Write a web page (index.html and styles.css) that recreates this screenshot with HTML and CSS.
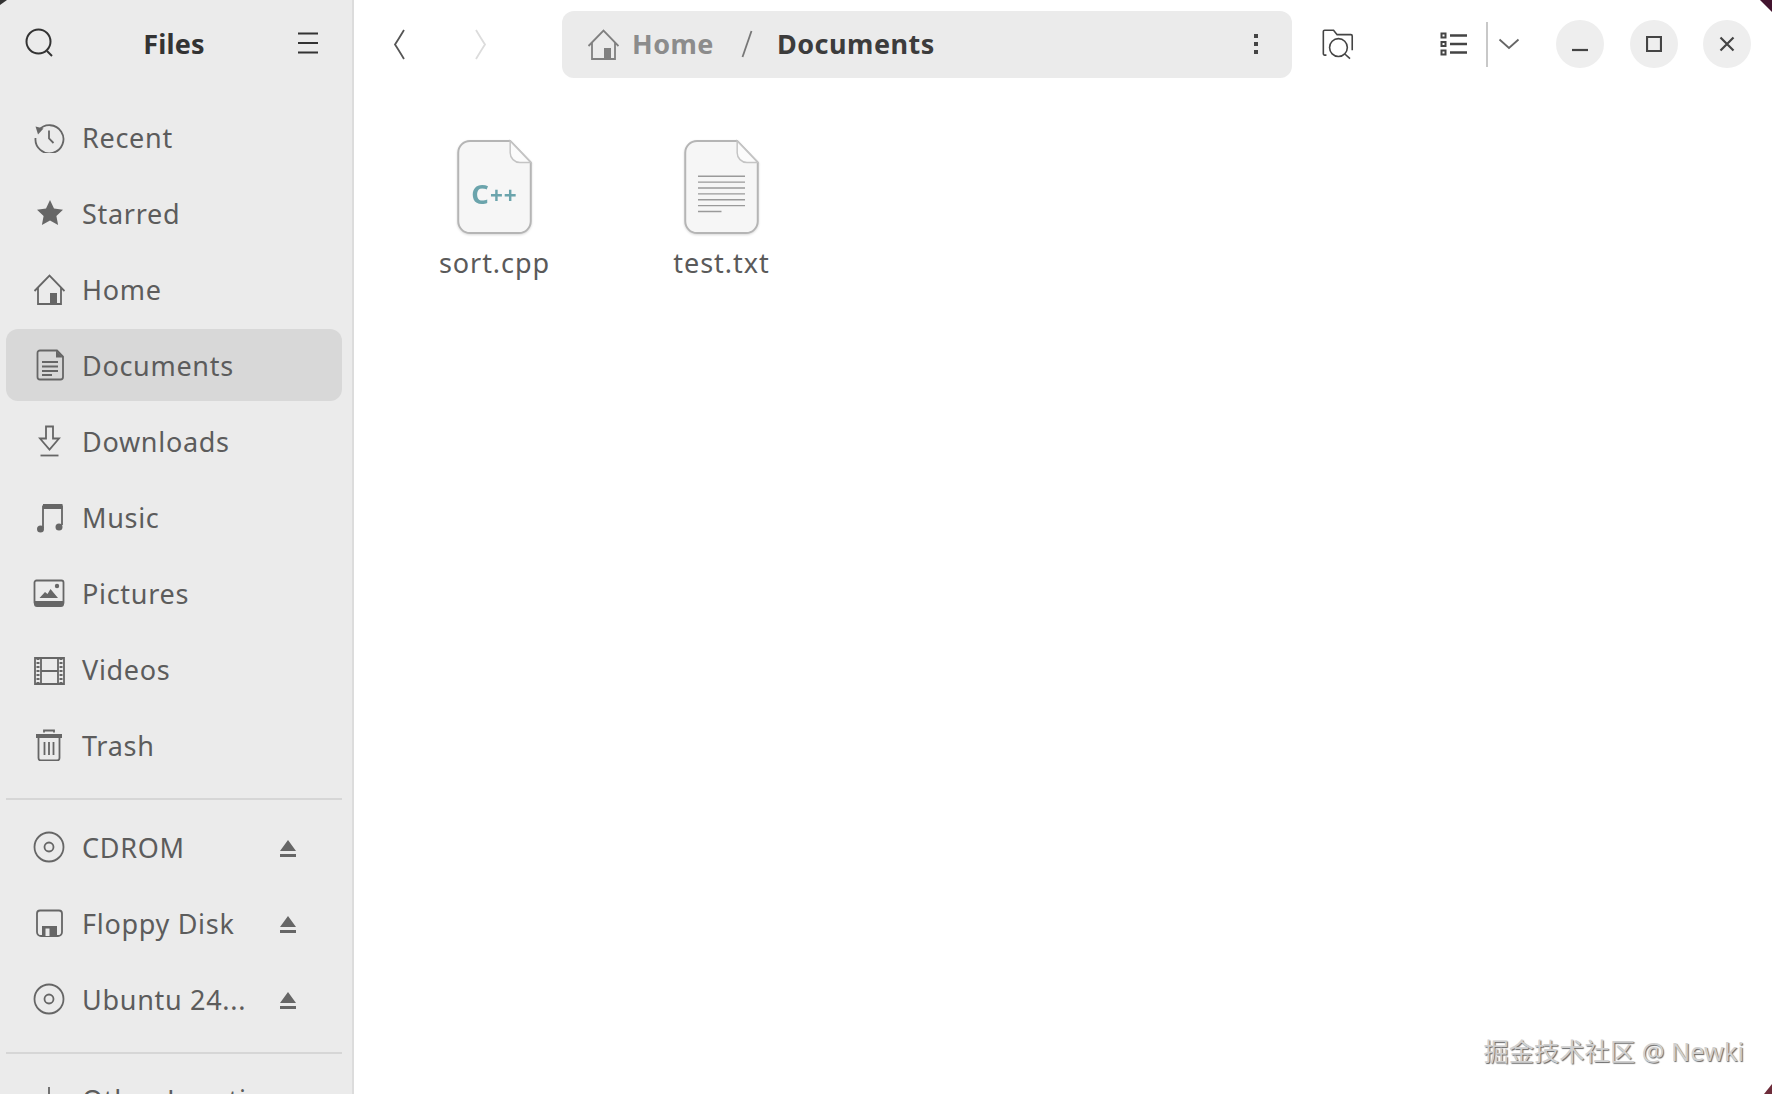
FILE: index.html
```html
<!DOCTYPE html>
<html lang="en">
<head>
<meta charset="utf-8">
<title>Files</title>
<link rel="stylesheet" href="styles.css">
</head>
<body>
<div class="window">
  <aside class="sidebar">
    <header class="side-head">
      <svg class="ico-head" viewBox="0 0 32 32"><circle cx="14.5" cy="14.5" r="12"/><path d="M23 24l5 5"/></svg>
      <span class="side-title">Files</span>
      <svg class="ico-head" viewBox="0 0 32 32"><path d="M6 6.5h20M6 16h20M6 25.5h20"/></svg>
    </header>
    <nav class="places">
      <a class="row"><svg class="ico" viewBox="0 0 32 32"><path d="M5.5 9.5A14 14 0 1 1 2.5 17"/><path class="solid" d="M2.5 5.5l8 2-5.5 6z"/><path d="M16 9.5v8l4.5 4.5"/></svg><span>Recent</span></a>
      <a class="row"><svg class="ico" viewBox="0 0 32 32"><path class="solid" d="M17 3l4 8.5 9 1.2-6.6 6.2 1.7 9.1-8.100-4.500-8.100 4.500 1.700-9.100L4 12.700l9-1.200z"/></svg><span>Starred</span></a>
      <a class="row"><svg class="ico" viewBox="0 0 32 32"><path d="M1.500 18L16.500 2.500 31.500 18M5 14v17h23V14"/><path class="solid" d="M17 20h7v11h-7z"/></svg><span>Home</span></a>
      <a class="row is-active"><svg class="ico" viewBox="0 0 32 32"><path d="M7 1.500h17l6 6V28a2.500 2.500 0 0 1-2.500 2.500h-20.500A2.500 2.500 0 0 1 4.500 28V4A2.500 2.500 0 0 1 7 1.500z"/><path class="solid" d="M23 1.500l7 7h-7z"/><path d="M9 13h16M9 17.500h16M9 22h16M9 26h10"/></svg><span>Documents</span></a>
      <a class="row"><svg class="ico" viewBox="0 0 32 32"><path d="M13 1.500h7v12h6l-9.500 11-9.500-11h6z"/><path d="M7.500 30.500h18"/></svg><span>Downloads</span></a>
      <a class="row"><svg class="ico" viewBox="0 0 32 32"><path d="M10 27V5.500h19V24"/><path class="solid" d="M10 3h19.500v5H10z"/><circle class="solid" cx="7.500" cy="28" r="3.500"/><circle class="solid" cx="26" cy="26" r="3.500"/></svg><span>Music</span></a>
      <a class="row"><svg class="ico" viewBox="0 0 32 32"><rect x="1.500" y="3.500" width="29" height="24" rx="2"/><path class="solid" d="M1 24h30v3a3 3 0 0 1-3 3H4a3 3 0 0 1-3-3zM6.500 21l5.500-6 2.500 2 3-5 7.500 9z"/><circle class="solid" cx="24" cy="9" r="2.200"/></svg><span>Pictures</span></a>
      <a class="row"><svg class="ico" viewBox="0 0 32 32"><path d="M2 5h29v26H2zM8 5v26M25 5v26M8 18h17"/><path class="dash" d="M5 5v26M28 5v26"/></svg><span>Videos</span></a>
      <a class="row"><svg class="ico" viewBox="0 0 32 32"><path d="M5.500 9v20a2.500 2.500 0 0 0 2.500 2.500h16a2.500 2.500 0 0 0 2.500-2.500V9"/><path class="solid" d="M3 5h26v4H3z"/><path d="M11 3.500V1.500h10v2M11.500 13v13M16 13v13M20.500 13v13"/></svg><span>Trash</span></a>
    </nav>
    <nav class="places places-devices">
      <a class="row"><svg class="ico" viewBox="0 0 32 32"><circle cx="16" cy="16" r="14.500"/><circle cx="16" cy="16" r="4.500"/></svg><span>CDROM</span><svg class="eject" viewBox="0 0 16 18"><path d="M8 0l8 11H0zM0 14h16v3H0z"/></svg></a>
      <a class="row"><svg class="ico" viewBox="0 0 32 32"><path d="M7 3.500h19a3 3 0 0 1 3 3V25a4 4 0 0 1-4 4H8a4 4 0 0 1-4-4V6.500a3 3 0 0 1 3-3z"/><path class="solid" d="M9 19h15v10H9z"/><path class="cut" d="M12.500 21.500h4v7.500h-4z"/></svg><span>Floppy Disk</span><svg class="eject" viewBox="0 0 16 18"><path d="M8 0l8 11H0zM0 14h16v3H0z"/></svg></a>
      <a class="row"><svg class="ico" viewBox="0 0 32 32"><circle cx="16" cy="16" r="14.500"/><circle cx="16" cy="16" r="4.500"/></svg><span class="clip">Ubuntu 24...</span><svg class="eject" viewBox="0 0 16 18"><path d="M8 0l8 11H0zM0 14h16v3H0z"/></svg></a>
    </nav>
    <nav class="places places-other">
      <a class="row"><svg class="ico" viewBox="0 0 32 32"><path d="M16 4v24M4 16h24"/></svg><span>Other Locations</span></a>
    </nav>
  </aside>
  <main class="content">
    <div class="toolbar">
      <button class="nav-btn"><svg class="chev" viewBox="0 0 16 32"><path d="M12 2Q6 12 3 16.500Q6 21 12 31"/></svg></button>
      <button class="nav-btn is-off"><svg class="chev" viewBox="0 0 16 32"><path d="M4 2Q10 12 13 16.500Q10 21 4 31"/></svg></button>
      <div class="pathbar">
        <svg class="ico ico-dim" viewBox="0 0 32 32"><path d="M1.500 18L16.500 2.500 31.500 18M5 14v17h23V14"/><path class="solid" d="M17 20h7v11h-7z"/></svg>
        <span class="crumb crumb-dim">Home</span>
        <svg class="slash" viewBox="0 0 12 28"><path d="M10.500 1L1.500 27"/></svg>
        <span class="crumb">Documents</span>
        <span class="dots"><i></i><i></i><i></i></span>
      </div>
      <button class="tool tool-search"><svg class="ico-tool" viewBox="0 0 36 36"><path d="M5 30.500H3a1.500 1.500 0 0 1-1.500-1.500V4A1.500 1.500 0 0 1 3 2.500h10l4 5h15.500A1.500 1.500 0 0 1 34 9v16"/><circle cx="18.500" cy="22" r="10"/><path d="M26 29.500l5.500 5"/></svg></button>
      <button class="tool tool-list"><svg class="ico-tool" viewBox="0 0 28 24"><path class="thick" d="M10 3.500h17M10 12h17M10 20.500h17"/><rect class="thin" x="1.500" y="1.500" width="4" height="4"/><rect class="thin" x="1.500" y="10" width="4" height="4"/><rect class="thin" x="1.500" y="18.500" width="4" height="4"/></svg></button>
      <span class="tool-sep"></span>
      <button class="tool-drop"><svg class="chev-down" viewBox="0 0 22 12"><path d="M1.500 1.500L11 10l9.500-8.500"/></svg></button>
      <div class="controls">
        <button class="ctl"><svg class="ctl-ico" viewBox="0 0 16 16"><path d="M0 14h16"/></svg></button>
        <button class="ctl"><svg class="ctl-ico" viewBox="0 0 16 16"><path d="M1 1h14v14H1z"/></svg></button>
        <button class="ctl"><svg class="ctl-ico" viewBox="0 0 16 16"><path d="M1.500 1.500l13 13M14.500 1.500l-13 13"/></svg></button>
      </div>
    </div>
    <section class="files">
      <figure class="file">
        <svg class="page" viewBox="0 0 78 98"><path class="sheet" d="M14 2h41l21 22v60a12 12 0 0 1-12 12H14A12 12 0 0 1 2 84V14A12 12 0 0 1 14 2z"/><path class="fold" d="M55 2v12a10 10 0 0 0 10 10h11z"/><text class="cpp" x="39" y="66" text-anchor="middle"><tspan class="cpp-c">C</tspan>++</text></svg>
        <figcaption>sort.cpp</figcaption>
      </figure>
      <figure class="file">
        <svg class="page" viewBox="0 0 78 98"><path class="sheet" d="M14 2h41l21 22v60a12 12 0 0 1-12 12H14A12 12 0 0 1 2 84V14A12 12 0 0 1 14 2z"/><path class="fold" d="M55 2v12a10 10 0 0 0 10 10h11z"/><path class="lines" d="M15 38h48M15 44h48M15 50h48M15 56h48M15 62h48M15 68h48M15 74h24"/></svg>
        <figcaption>test.txt</figcaption>
      </figure>
    </section>
  </main>
  <div class="watermark">掘金技术社区 @ Newki</div>
  <span class="corner corner-tl"></span>
  <span class="corner corner-tr"></span>
  <span class="corner corner-br"></span>
</div>
</body>
</html>
```
FILE: styles.css
```css
html, body { margin: 0; padding: 0; height: 100%; }
body { background: #fff; overflow: hidden; font-family: "Noto Sans", "Noto Sans CJK SC", sans-serif; color: #555; }
button { background: none; border: 0; padding: 0; margin: 0; font: inherit; color: inherit; display: flex; align-items: center; justify-content: center; }
svg { display: block; flex: none; fill: none; stroke: #666; stroke-width: 1.800; }
svg .solid { fill: #666; stroke: none; }
svg .cut { fill: #ebebeb; stroke: none; }
svg .dash { stroke-width: 3; stroke-dasharray: 2 2; }

.window { position: relative; display: flex; width: 1772px; height: 1094px; overflow: hidden; }

.sidebar { flex: none; width: 354px; height: 1094px; box-sizing: border-box; background: #ebebeb; border-right: 2px solid #dcdcdc; overflow: hidden; }
.side-head { display: flex; align-items: center; justify-content: space-between; height: 86px; padding: 0 28px 0 24px; box-sizing: border-box; }
.ico-head { width: 32px; height: 32px; stroke: #333; stroke-width: 2; }
.side-title { font-size: 27px; font-weight: 700; color: #333; letter-spacing: 0.2px; }

.places { display: flex; flex-direction: column; gap: 4px; margin: 15px 10px 17px 6px; }
.places-devices, .places-other { margin-top: 0; padding-top: 11px; border-top: 2px solid #d6d6d6; }
.places-other { padding-top: 9px; }
.row { display: flex; align-items: center; height: 72px; padding-left: 27px; padding-right: 46px; border-radius: 12px; font-size: 27px; letter-spacing: 0.7px; color: #5c5c5c; white-space: nowrap; }
.row span { margin-left: 17px; }
.row .eject { margin-left: auto; margin-top: 4px; }
.is-active { background: #d8d8d8; }
.ico { width: 32px; height: 32px; }
.ico-dim { stroke: #808080; }
.ico-dim .solid { fill: #808080; }
.eject { width: 16px; height: 18px; stroke: none; fill: #666; }

.content { flex: 1; min-width: 0; background: #fff; }
.toolbar { display: flex; align-items: center; height: 88px; padding-left: 6px; }
.nav-btn { width: 80px; height: 67px; }
.chev { width: 16px; height: 32px; stroke: #555; stroke-width: 1.800; }
.is-off .chev { stroke: #dcdcdc; }
.pathbar { display: flex; align-items: center; width: 730px; height: 67px; margin-left: 42px; padding: 0 0 0 25px; box-sizing: border-box; background: #ebebeb; border-radius: 12px; font-size: 27px; }
.crumb { font-weight: 700; color: #3c3c3c; letter-spacing: 0.5px; margin-bottom: 2px; }
.crumb-dim { color: #8c8c8c; margin-left: 13px; }
.slash { width: 12px; height: 28px; margin: 0 24px 0 27px; stroke: #777; }
.dots { display: flex; flex-direction: column; gap: 4px; margin-left: auto; margin-right: 34px; }
.dots i { display: block; width: 4px; height: 4px; background: #444; }
.tool { height: 60px; width: 60px; }
.tool-search { margin-left: 16px; }
.tool-list { margin-left: 56px; }
.ico-tool { width: 32px; height: 32px; stroke: #444; }
.tool-list .ico-tool { width: 28px; height: 24px; }
.thick { stroke-width: 2.500; }
.thin { stroke-width: 2; stroke: #444; }
.tool-sep { width: 2px; height: 45px; margin-left: 2px; background: #c8c8c8; }
.tool-drop { width: 42px; height: 60px; }
.chev-down { width: 22px; height: 12px; stroke: #666; }
.controls { display: flex; gap: 25.500px; margin-left: 26px; }
.ctl { width: 48px; height: 48px; border-radius: 50%; background: #eeeeee; }
.ctl-ico { width: 16px; height: 16px; stroke: #444; stroke-width: 2.200; }

.files { display: flex; padding: 51px 0 0 27px; }
.file { width: 227px; margin: 0; display: flex; flex-direction: column; align-items: center; }
.page { width: 77px; height: 96px; filter: drop-shadow(0 1px 1px rgba(0,0,0,.15)); }
.sheet { fill: #f6f6f6; stroke: #b5b5b5; stroke-width: 2; }
.fold { fill: #fbfbfb; stroke: #c4c4c4; stroke-width: 1.500; }
.lines { stroke: #9a9a9a; stroke-width: 1.400; }
.cpp { font-family: "Noto Sans", sans-serif; font-size: 23px; font-weight: 700; letter-spacing: 1px; fill: #6ba4ac; stroke: none; }
.cpp-c { font-size: 28px; font-weight: 700; }
.file figcaption { font-size: 27px; line-height: 36px; margin-top: 10px; letter-spacing: 0.95px; color: #5a5a5a; }

.watermark { position: absolute; right: 28px; top: 1034px; font-size: 25.300px; line-height: 34px; color: #d0d0d0; text-shadow: 1px 1px 1px #666; white-space: nowrap; }

.corner { position: absolute; display: block; }
.corner-tl { left: 0; top: 0; width: 7px; height: 5px; background: #333; clip-path: polygon(0 0, 100% 0, 0 100%); }
.corner-tr { right: 0; top: 0; width: 12px; height: 12px; background: #43142f; clip-path: polygon(0 0, 100% 0, 100% 100%); }
.corner-br { right: 0; bottom: 0; width: 8px; height: 10px; background: #6d2c3a; clip-path: polygon(100% 0, 100% 100%, 0 100%); }
```
